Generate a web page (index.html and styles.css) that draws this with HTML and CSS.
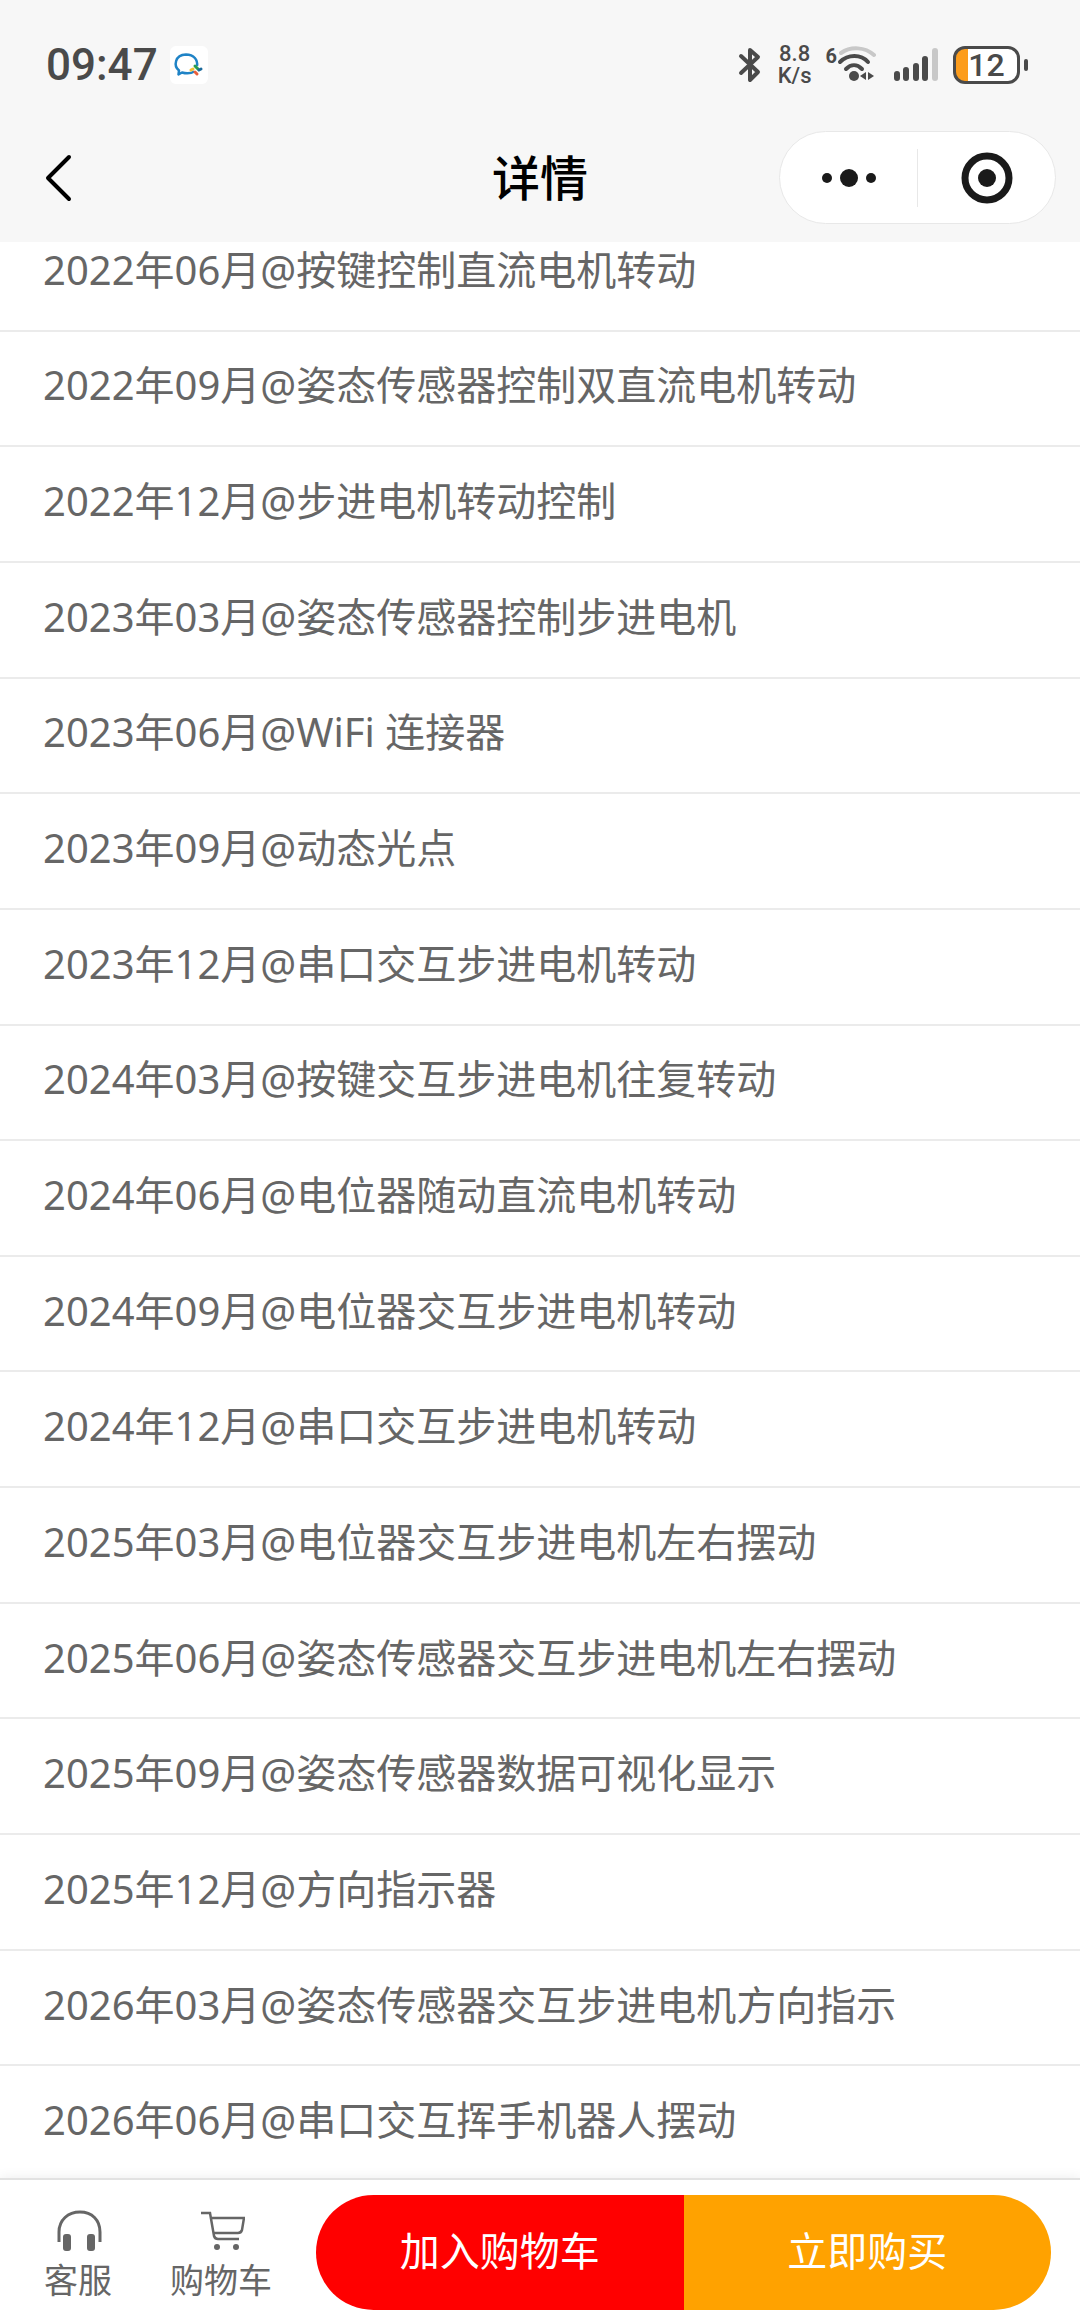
FILE: index.html
```html
<!DOCTYPE html>
<html lang="zh-CN">
<head>
    <meta charset="UTF-8">
    <meta name="viewport" content="width=device-width, initial-scale=1.0">
    <title>详情</title>
    <link rel="stylesheet" href="styles.css">
</head>
<body>
<header class="top">
    <div class="status">
        <span class="time">09:47</span>
        <svg class="wecom" width="38" height="38" viewBox="0 0 38 38">
            <rect width="38" height="38" rx="6" fill="#fff"/>
            <path d="M24.500 25.500C20 28 15.500 27.500 12 26.500L8.500 28.500L9 24.500C3.500 20 4.500 9 16 8.500C24 8.500 28 14 27 20" fill="none" stroke="#1f83c6" stroke-width="2.500" stroke-linejoin="round"/>
            <path d="M25 20l3 3" stroke="#2a9d50" stroke-width="3" stroke-linecap="round"/>
            <path d="M29 24l2-1" stroke="#1b6a9c" stroke-width="3" stroke-linecap="round"/>
            <path d="M25 26l2 2" stroke="#e8603c" stroke-width="3" stroke-linecap="round"/>
            <path d="M21 24l2-1" stroke="#f2c230" stroke-width="3" stroke-linecap="round"/>
        </svg>
        <div class="status-right">
            <svg class="bluetooth" width="24" height="38" viewBox="0 0 24 38">
                <path d="M3 10L20 26L12 34V4L20 11L3 27" fill="none" stroke="#4a4a4a" stroke-width="4" stroke-linecap="round" stroke-linejoin="round"/>
            </svg>
            <div class="speed">
                <span>8.8</span>
                <span>K/s</span>
            </div>
            <div class="wifi">
                <span class="wifi-gen">6</span>
                <svg width="40" height="38" viewBox="0 0 40 38">
                    <g fill="none" stroke-width="4" stroke-linecap="round">
                        <path d="M4 7C14 0 28 1 37 9" stroke="#c8c8c8"/>
                        <path d="M3 16C11 8 24 8 31 16" stroke="#4a4a4a"/>
                        <path d="M9 23C14 18 20 18 25 23" stroke="#4a4a4a"/>
                    </g>
                    <circle cx="17" cy="30" r="5" fill="#4a4a4a"/>
                    <path d="M29 26v8l-6-4zM31 26v8l6-4z" fill="#4a4a4a"/>
                </svg>
            </div>
            <svg class="signal" width="46" height="38" viewBox="0 0 46 38">
                <g stroke="#4a4a4a" stroke-width="6" stroke-linecap="round">
                    <path d="M4 28v4M13 24v8M23 20v12M32 13v19"/>
                    <path d="M42 5v27" stroke="#c8c8c8"/>
                </g>
            </svg>
            <div class="battery"><span>12</span></div>
        </div>
    </div>
    <nav class="nav">
        <button class="back" aria-label="返回">
            <svg width="30" height="50" viewBox="0 0 30 50">
                <path d="M25 4L4 25L25 46" fill="none" stroke="#000" stroke-width="4" stroke-linecap="round" stroke-linejoin="round"/>
            </svg>
        </button>
        <h1>详情</h1>
        <div class="capsule">
            <button aria-label="更多">
                <svg width="60" height="60" viewBox="0 0 60 60" fill="#1a1a1a">
                    <circle cx="8" cy="30" r="5"/>
                    <circle cx="30" cy="30" r="9"/>
                    <circle cx="52" cy="30" r="5"/>
                </svg>
            </button>
            <button aria-label="关闭">
                <svg width="60" height="60" viewBox="0 0 60 60" fill="#1a1a1a">
                    <circle cx="30" cy="30" r="22" fill="none" stroke="#1a1a1a" stroke-width="7"/>
                    <circle cx="30" cy="30" r="9"/>
                </svg>
            </button>
        </div>
    </nav>
</header>

<ul class="list">
    <li>2022年06月@按键控制直流电机转动</li>
    <li>2022年09月@姿态传感器控制双直流电机转动</li>
    <li>2022年12月@步进电机转动控制</li>
    <li>2023年03月@姿态传感器控制步进电机</li>
    <li>2023年06月@WiFi 连接器</li>
    <li>2023年09月@动态光点</li>
    <li>2023年12月@串口交互步进电机转动</li>
    <li>2024年03月@按键交互步进电机往复转动</li>
    <li>2024年06月@电位器随动直流电机转动</li>
    <li>2024年09月@电位器交互步进电机转动</li>
    <li>2024年12月@串口交互步进电机转动</li>
    <li>2025年03月@电位器交互步进电机左右摆动</li>
    <li>2025年06月@姿态传感器交互步进电机左右摆动</li>
    <li>2025年09月@姿态传感器数据可视化显示</li>
    <li>2025年12月@方向指示器</li>
    <li>2026年03月@姿态传感器交互步进电机方向指示</li>
    <li>2026年06月@串口交互挥手机器人摆动</li>
</ul>

<footer class="bar">
    <a class="tool" href="#">
        <svg width="48" height="44" viewBox="0 0 48 44">
            <path d="M5 33V23C5 11 14 3 26 3S46 11 46 23V33" fill="none" stroke="#666" stroke-width="3"/>
            <rect x="9" y="25" width="8" height="17" rx="3" fill="#666"/>
            <rect x="33" y="25" width="8" height="17" rx="3" fill="#666"/>
        </svg>
        <span>客服</span>
    </a>
    <a class="tool" href="#">
        <svg width="48" height="44" viewBox="0 0 48 44">
            <path d="M4 4H13L17 27Q18 30 21 30H42M14 9H47L45 21Q44 24 41 24H17" fill="none" stroke="#666" stroke-width="2.500"/>
            <circle cx="20" cy="38" r="3" fill="#666"/>
            <circle cx="39" cy="38" r="3" fill="#666"/>
        </svg>
        <span>购物车</span>
    </a>
    <div class="buy">
        <button class="add">加入购物车</button>
        <button class="now">立即购买</button>
    </div>
</footer>
</body>
</html>
```
FILE: styles.css
```css
* {
    box-sizing: border-box;
}

body, ul, li, h1 {
    margin: 0;
    padding: 0;
    list-style: none;
}

body {
    min-height: 100vh;
    display: flex;
    flex-direction: column;
    background: #fff;
    color: #666;
    font-family: "Noto Sans", "Noto Sans CJK SC", sans-serif;
    font-size: 40px;
}

svg {
    display: block;
    flex: none;
}

button {
    border: 0;
    padding: 0;
    background: none;
    color: inherit;
    font: inherit;
    cursor: pointer;
}

/* 顶部 */
.top {
    position: sticky;
    top: 0;
    z-index: 2;
    background: #f7f7f7;
}

.status {
    height: 113px;
    padding: 16px 52px 0 46px;
    display: flex;
    align-items: center;
    color: #4a4a4a;
    font-family: Roboto, sans-serif;
}

.time {
    font-size: 44px;
    font-weight: 500;
}

.wecom {
    margin-left: 12px;
}

.status-right {
    margin-left: auto;
    display: flex;
    align-items: center;
}

.speed {
    display: flex;
    flex-direction: column;
    align-items: center;
    margin: 0 14px 0 16px;
    font-size: 22px;
    font-weight: 500;
    line-height: 22px;
}

.wifi {
    display: flex;
    align-items: flex-start;
}

.wifi-gen {
    font-size: 20px;
    font-weight: 700;
    line-height: 20px;
}

.signal {
    margin: 0 14px 0 16px;
}

.battery {
    position: relative;
    width: 67px;
    height: 38px;
    margin-right: 8px;
    border: 3px solid #4a4a4a;
    border-radius: 12px;
    background: linear-gradient(to right, #fc9c1c 12px, #fff 12px);
    font-size: 32px;
    font-weight: 500;
    line-height: 32px;
    text-align: center;
}

.battery::after {
    content: "";
    position: absolute;
    right: -11px;
    top: 10px;
    width: 4px;
    height: 12px;
    border-radius: 2px;
    background: #4a4a4a;
}

.nav {
    height: 129px;
    padding: 0 24px;
    display: grid;
    grid-template-columns: 1fr auto 1fr;
    align-items: center;
    color: #000;
}

.back {
    justify-self: start;
    padding: 0 20px;
}

.nav h1 {
    font-size: 48px;
    font-weight: 500;
    line-height: 60px;
}

.capsule {
    justify-self: end;
    width: 277px;
    height: 93px;
    display: flex;
    align-items: center;
    border: 1px solid #e8e8e8;
    border-radius: 47px;
    background: #fff;
}

.capsule button {
    flex: 1;
    height: 58px;
    display: flex;
    align-items: center;
    justify-content: center;
}

.capsule button + button {
    border-left: 1px solid #e8e8e8;
}

/* 列表, 首行和末行略微滚到栏下面 */
.list {
    flex: 1;
    display: grid;
    grid-auto-rows: 1fr;
    margin: -26px 0 -4px;
}

.list li {
    display: flex;
    align-items: center;
    padding: 0 43px 6px;
    border-bottom: 2px solid #ebebeb;
    line-height: 60px;
}

/* 底部 */
.bar {
    position: sticky;
    bottom: 0;
    z-index: 2;
    display: flex;
    align-items: center;
    padding: 15px 29px 14px 44px;
    border-top: 2px solid #e2e2e2;
    background: #fff;
    box-shadow: 0 0 12px rgba(0, 0, 0, .08);
}

.tool {
    display: flex;
    flex-direction: column;
    align-items: center;
    gap: 2px;
    margin-right: 58px;
    padding-top: 8px;
    color: #666;
    font-size: 34px;
    line-height: 50px;
    text-decoration: none;
}

.tool + .tool {
    margin-right: 44px;
}

.buy {
    flex: 1;
    display: flex;
    height: 115px;
    border-radius: 58px;
    overflow: hidden;
    color: #fff;
}

.buy button {
    flex: 1;
    padding-bottom: 8px;
}

.add {
    background: #f00;
}

.now {
    background: #ffa200;
}
```
